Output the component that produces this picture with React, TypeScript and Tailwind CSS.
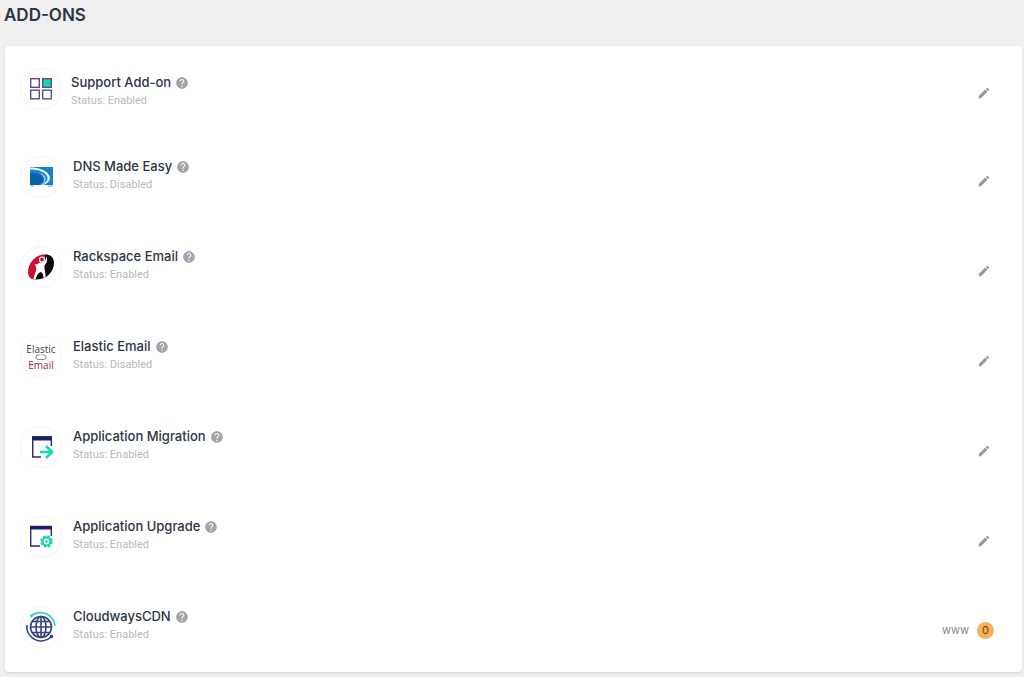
import type { ReactNode } from "react";
import { clsx } from "clsx";
import { MdEdit, MdHelp } from "react-icons/md";

const SupportIcon = () => (
  <svg viewBox="0 0 24 24" className="size-6" fill="none" stroke="#5f4b8b" strokeWidth="1.4">
    <rect x="1.7" y="1.7" width="8.6" height="8.6" />
    <rect x="13.7" y="1.7" width="8.6" height="8.6" fill="#13dba5" />
    <rect x="1.7" y="13.2" width="8.6" height="8.6" />
    <rect x="13.7" y="13.2" width="8.6" height="8.6" />
  </svg>
);

const DnsIcon = () => (
  <svg viewBox="0 0 24 24" className="size-6">
    <rect x="1" y="2" width="23" height="18" fill="#1486c8" />
    <path d="M1 8C8 8 14 10 15.500 14C16 17 13 19 10 20H1Z" fill="#0b62a8" />
    <path d="M1 2.500C9 2.500 17 5 20 10C22.500 15 19 18.500 14 20H12C17 18 20 15 18 11C15.500 6.500 9 4.500 1 4.500Z" fill="#fff" />
    <path d="M9 7C14 8.500 17.500 12 16.500 15C16 17 14 19 11.500 20C14 18 15.500 16 15 14C14.500 11 12 8.500 9 7Z" fill="#a5d8f1" />
    <path d="M1.500 21H5M19 21H23.500" stroke="#8b98a5" strokeWidth="1.2" />
  </svg>
);

const RackspaceIcon = () => (
  <svg viewBox="0 0 28 28" className="size-7">
    <path d="M18 1.500C9 1 1 10 1 19C1 23 3 26 7 26.500L10 17L8 11L13 12C17 10 18 5 18 1.500Z" fill="#c4122f" />
    <path d="M18 1.500C24 1 27 5 27 10C27 18 20 26.500 10 26.500H7L9 22L12 16L15 11L18 7Z" fill="#0c0c0c" />
    <path d="M6.500 26C7.500 20 10 17 10 13C10.500 10 12.500 9 14.500 9.500C18 10 19.500 6 19 3C21.500 7 19 11 17.500 12.500C17 17 19 20 18.500 24L16.500 25C16.500 21 15 19 13.500 19C11 20 9.500 23 8.500 26.500Z" fill="#fff" />
    <circle cx="15" cy="6.500" r="2.500" fill="#c4122f" stroke="#fff" strokeWidth="1.2" />
  </svg>
);

const ElasticIcon = () => (
  <span className="flex flex-col items-center font-['Open_Sans',sans-serif] text-[10px] leading-none">
    <span className="text-[#3f3f46]">Elastic</span>
    <svg viewBox="0 0 12 6" className="h-1.5 w-3" fill="none" stroke="#8a8a8a">
      <rect x="1" y="1" width="10" height="4.5" rx="2.2" />
      <path d="M4.500 1H7.500" stroke="#fff" />
    </svg>
    <span className="text-[#963038]">Email</span>
  </span>
);

const MigrationIcon = () => (
  <svg viewBox="0 0 24 24" className="size-6" fill="none">
    <path d="M12 22H3.700V2H22.300V11" stroke="#2b2a68" strokeWidth="1.4" />
    <path d="M3 1.300H23V5.500H3Z" fill="#1f1c69" />
    <path d="M11 17H23M17 11L23.200 17L17 23" stroke="#12dfab" strokeWidth="2.5" />
  </svg>
);

const UpgradeIcon = () => (
  <svg viewBox="0 0 24 24" className="size-6" fill="none">
    <path d="M11 21H1.700V1.500H22.300V11" stroke="#2b2a68" strokeWidth="1.4" />
    <path d="M1 1H23V4.500H1Z" fill="#1f1c69" />
    <circle cx="17.5" cy="16.5" r="5.200" stroke="#12d6a8" strokeWidth="2" strokeDasharray="2.500 1.584" />
    <circle cx="17.5" cy="16.5" r="3.900" stroke="#12d6a8" strokeWidth="2" />
    <circle cx="17.5" cy="16.5" r="1.300" fill="#12d6a8" />
  </svg>
);

const CdnIcon = () => (
  <svg viewBox="0 0 32 32" className="size-8" fill="none" strokeWidth="1.6">
    <g stroke="#37417d">
      <circle cx="16" cy="16" r="10.5" />
      <ellipse cx="16" cy="16" rx="5" ry="10.5" />
      <path d="M16 5.500V26.500M5.500 16H26.500M7.500 10.500H24.500M7.500 21.500H24.500" />
      <path d="M2 14C0.500 23 9 31 18 29.800C21 29.500 24 28 26 26" />
    </g>
    <circle cx="26.5" cy="25.5" r="1.8" fill="#37417d" />
    <path d="M6 5C13 -0.500 23 1 28 8.500C29.500 11 30 13 30 15" stroke="#35d6b4" />
    <circle cx="6.5" cy="4.8" r="1.6" fill="#35d6b4" />
  </svg>
);

type Addon = {
  name: string;
  status: "Enabled" | "Disabled";
  icon: ReactNode;
  usage?: { label: string; count: number };
};

const addons: Addon[] = [
  { name: "Support Add-on", status: "Enabled", icon: <SupportIcon /> },
  { name: "DNS Made Easy", status: "Disabled", icon: <DnsIcon /> },
  { name: "Rackspace Email", status: "Enabled", icon: <RackspaceIcon /> },
  { name: "Elastic Email", status: "Disabled", icon: <ElasticIcon /> },
  { name: "Application Migration", status: "Enabled", icon: <MigrationIcon /> },
  { name: "Application Upgrade", status: "Enabled", icon: <UpgradeIcon /> },
  {
    name: "CloudwaysCDN",
    status: "Enabled",
    icon: <CdnIcon />,
    usage: { label: "www", count: 0 },
  },
];

const AddonRow = ({ addon, first }: { addon: Addon; first: boolean }) => (
  <li className={clsx("flex items-center", first ? "h-[86px] gap-[9px]" : "h-[90px] gap-[11px]")}>
    <div className="flex size-[42px] shrink-0 items-center justify-center rounded-full border border-[#f5f5f5]">
      {addon.icon}
    </div>
    <div className={clsx("grow", first ? "pt-1" : "pb-1")}>
      <div className="flex items-center gap-1">
        <h2 className="text-[13px] leading-5 font-medium text-[#2c3542]">{addon.name}</h2>
        <button aria-label={`About ${addon.name}`} className="pt-0.5 text-[#a3a3a9]">
          <MdHelp className="size-3.5" />
        </button>
      </div>
      <p className="text-[11px] leading-[18px] text-[#b9b9b9] font-['Roboto',sans-serif]">
        Status: {addon.status}
      </p>
    </div>
    {addon.usage ? (
      <div className="flex items-center gap-2 pt-1.5 text-[11px] text-[#8b8b8b]">
        <span>{addon.usage.label}</span>
        <span className="flex size-[17px] items-center justify-center rounded-full bg-[#fbb05b] text-[#6b3f16]">
          {addon.usage.count}
        </span>
      </div>
    ) : (
      <button aria-label={`Edit ${addon.name}`} className="mr-[3px] pt-2 text-[#999]">
        <MdEdit className="size-3.5" />
      </button>
    )}
  </li>
);

export default function App() {
  return (
    <main className="min-h-screen bg-[#f0f0f0] pb-[5px] font-['Inter',sans-serif]">
      <h1 className="px-1 pt-[3px] pb-[19px] text-[17px] leading-6 font-semibold text-[#2c3542]">ADD-ONS</h1>
      <ul className="mr-0.5 ml-[5px] rounded-sm bg-white pr-7 pl-[15px] shadow">
        {addons.map((addon, i) => (
          <AddonRow key={addon.name} addon={addon} first={i === 0} />
        ))}
      </ul>
    </main>
  );
}
